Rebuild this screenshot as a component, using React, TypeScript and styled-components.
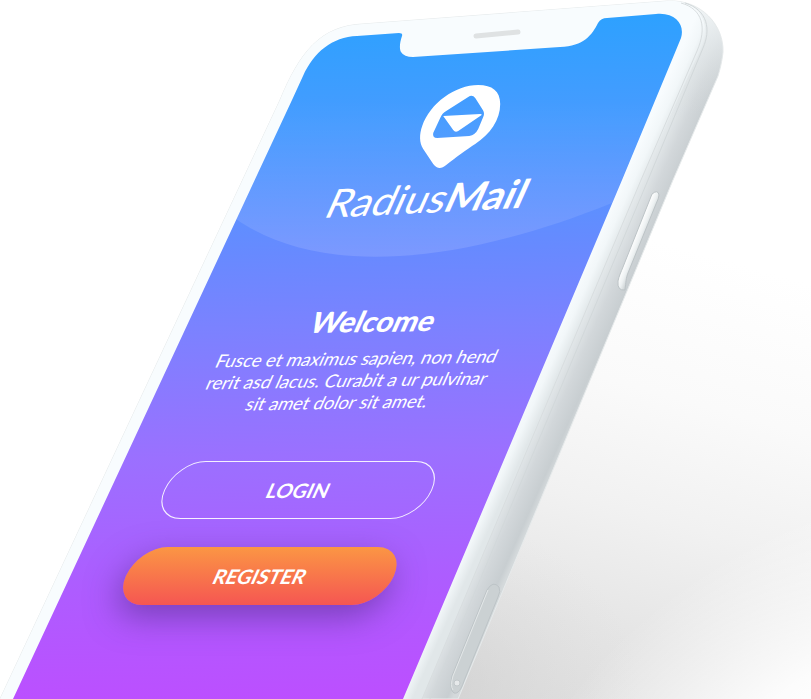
import React from "react";
import styled, { createGlobalStyle, css } from "styled-components";

const GlobalStyle = createGlobalStyle`
  *, *::before, *::after { box-sizing: border-box; }
  body {
    margin: 0;
    background: #ffffff;
    font-family: Lato, "Open Sans", sans-serif;
  }
`;

const Stage = styled.main`
  position: relative;
  display: flex;
  justify-content: center;
  min-height: 100vh;
  overflow: hidden;
`;

const PhoneArt = styled.svg`
  position: absolute;
  inset: 0;
  width: 100%;
  height: 100%;
`;

/* The whole column leans with the phone, so its centre line follows the screen. */
const Screen = styled.div`
  position: relative;
  display: flex;
  flex-direction: column;
  align-items: center;
  padding: 80px 0 92px;
  color: #ffffff;
  text-align: center;
  transform: skewX(-24deg);
  transform-origin: center 250px;
`;

const Brand = styled.header`
  display: flex;
  flex-direction: column;
  align-items: center;
`;

const Pin = styled.svg`
  display: block;
  width: 90px;
  height: 92px;
  transform: skewX(24deg);
`;

const Wordmark = styled.div`
  font-size: 40px;
  font-weight: 400;
  line-height: 52px;
  white-space: nowrap;
  transform: skewY(-3deg);

  strong {
    font-weight: 700;
  }
`;

const Intro = styled.section`
  margin-top: 80px;
  transform: skewY(-1deg);
`;

const Title = styled.h1`
  margin: 0;
  font-size: 29px;
  font-weight: 900;
  line-height: 34px;
`;

const Message = styled.p`
  margin: 9px 0 0;
  font-size: 18px;
  line-height: 22px;
  white-space: nowrap;
`;

const Actions = styled.div`
  display: flex;
  flex-direction: column;
  gap: 28px;
  margin-top: 48px;
`;

const PillButton = styled.button<{ $filled?: boolean }>`
  width: 268px;
  height: 58px;
  padding: 0;
  border: 1px solid rgba(255, 255, 255, 0.9);
  border-radius: 29px;
  background: transparent;
  color: #ffffff;
  font: 700 20px/24px Lato, "Open Sans", sans-serif;
  cursor: pointer;

  ${({ $filled }) =>
    $filled &&
    css`
      border: 0;
      background: linear-gradient(#fb9644, #f55652);
      box-shadow: 0 12px 32px rgba(76, 44, 130, 0.55);
    `}
`;

const bodyPath =
  "M0 699 L280 100 C300 52 320 26 363 24 L667 1 C702 -1 724 26 723 52 C722 60 721 66 718 76 L673 180 L458 699 Z";
const facePath =
  "M0 699 L280 100 C300 52 320 26 363 24 L667 1 C694 -1 708 18 705 36 C704 44 698 56 692 68 L641 180 L422 699 Z";
const screenPath =
  "M13 699 L292 100 L303 76 C314 52 332 37 357 36 L399 33 Q403 33 402 36 C400 42 399 48 401 52 Q404 57 413 57 L560 47 C584 46 592 35 598 23 Q601 18 607 18 L656 14 C676 12 685 25 681 38 L674 55 L622 180 L487 500 L403 699 Z";

const Phone = () => (
  <PhoneArt viewBox="0 0 811 699" preserveAspectRatio="xMidYMin slice" aria-hidden="true">
    <defs>
      <linearGradient id="floor" gradientUnits="userSpaceOnUse" x1="690" y1="250" x2="560" y2="720">
        <stop offset="0" stopColor="#ffffff" />
        <stop offset="0.3" stopColor="#fafafa" />
        <stop offset="0.55" stopColor="#f1f1f1" />
        <stop offset="0.8" stopColor="#e5e5e5" />
        <stop offset="1" stopColor="#dedede" />
      </linearGradient>
      <radialGradient
        id="floorCore"
        gradientUnits="userSpaceOnUse"
        cx="0"
        cy="0"
        r="1"
        gradientTransform="translate(440 690) scale(200 170)"
      >
        <stop offset="0" stopColor="#c8c8c8" stopOpacity="0.5" />
        <stop offset="1" stopColor="#d8d8d8" stopOpacity="0" />
      </radialGradient>
      <radialGradient
        id="floorLight"
        gradientUnits="userSpaceOnUse"
        cx="0"
        cy="0"
        r="1"
        gradientTransform="translate(830 740) rotate(-32) scale(360 210)"
      >
        <stop offset="0" stopColor="#ffffff" />
        <stop offset="0.3" stopColor="#ffffff" stopOpacity="0.9" />
        <stop offset="1" stopColor="#ffffff" stopOpacity="0" />
      </radialGradient>
      <linearGradient id="display" gradientUnits="userSpaceOnUse" x1="330" y1="20" x2="345" y2="699">
        <stop offset="0" stopColor="#2da1ff" />
        <stop offset="0.16" stopColor="#489bff" />
        <stop offset="0.34" stopColor="#678aff" />
        <stop offset="0.45" stopColor="#7b82ff" />
        <stop offset="0.64" stopColor="#9b70ff" />
        <stop offset="0.82" stopColor="#ad5dff" />
        <stop offset="1" stopColor="#bc4fff" />
      </linearGradient>
      <linearGradient id="side" gradientUnits="userSpaceOnUse" x1="641" y1="180" x2="675" y2="195">
        <stop offset="0" stopColor="#e5eaec" />
        <stop offset="0.45" stopColor="#d2d7da" />
        <stop offset="0.85" stopColor="#c8ced1" />
        <stop offset="1" stopColor="#d4d9db" />
      </linearGradient>
      <linearGradient id="cornerLight" gradientUnits="userSpaceOnUse" x1="690" y1="0" x2="715" y2="110">
        <stop offset="0" stopColor="#f4f8f9" />
        <stop offset="0.4" stopColor="#e4e9eb" stopOpacity="0.8" />
        <stop offset="1" stopColor="#d4d9db" stopOpacity="0" />
      </linearGradient>
      <linearGradient id="bezel" gradientUnits="userSpaceOnUse" x1="622" y1="180" x2="642" y2="189">
        <stop offset="0" stopColor="#f8fcfe" />
        <stop offset="0.5" stopColor="#f2f7f9" />
        <stop offset="1" stopColor="#e1e7e9" />
      </linearGradient>
      <linearGradient id="key" gradientUnits="userSpaceOnUse" x1="634" y1="238" x2="644" y2="242">
        <stop offset="0" stopColor="#ffffff" />
        <stop offset="0.5" stopColor="#edf1f2" />
        <stop offset="1" stopColor="#c9cfd1" />
      </linearGradient>
      <linearGradient id="haze" gradientUnits="userSpaceOnUse" x1="0" y1="100" x2="0" y2="256">
        <stop offset="0" stopColor="#ffffff" stopOpacity="0" />
        <stop offset="1" stopColor="#ffffff" stopOpacity="0.13" />
      </linearGradient>
    </defs>

    <path d="M640 230 H811 V699 H400 Z" fill="url(#floor)" />
    <path d="M640 230 H811 V699 H400 Z" fill="url(#floorCore)" />
    <path d="M640 230 H811 V699 H400 Z" fill="url(#floorLight)" />
    <path d={bodyPath} fill="url(#side)" />
    <path d={bodyPath} fill="url(#cornerLight)" stroke="#e6eaeb" />
    <path d={facePath} fill="url(#bezel)" />
    <path
      d="M685 3 C708 10 711 30 703 48 L648 180 L430 699"
      fill="none"
      stroke="#d2d8da"
    />
    <path d="M681 3 C703 9 707 28 697 51 L641 180 L422 699" fill="none" stroke="#d8dddf" />
    <path d={screenPath} fill="url(#display)" />
    <path
      d="M236 219 C300 264 420 280 612 203 L655 100 L292 100 Z"
      fill="url(#haze)"
    />

    <path d="M476 36 L518 32" stroke="#dfe2e3" strokeWidth="5" strokeLinecap="round" />

    <path
      d="M652 194 Q658 189 659 195 Q659 198 656 204 L628 273 C626 278 626 282 625 290 Q617 291 618 281 C619 276 621 272 623 267 Z"
      fill="url(#key)"
      stroke="#bcc3c6"
    />
    <path
      d="M487 590 Q493 580 499 587 Q501 591 498 597 L464 681 C461 690 458 694 454 693 Q449 690 452 676 Z"
      fill="#cbd1d3"
      stroke="#bdc4c7"
    />
    <path d="M488 590 L453 676 Q450 686 453 690" fill="none" stroke="#e3e7e8" />
    <circle cx="457" cy="683" r="3" fill="#e6e9ea" stroke="#c2c8cb" />
  </PhoneArt>
);

export default function App() {
  return (
    <>
      <GlobalStyle />
      <Stage>
        <Phone />
        <Screen>
          <Brand>
            <Pin viewBox="415 80 90 92" aria-hidden="true">
              <path
                fill="#ffffff"
                fillRule="evenodd"
                d="M478 85 C492 85 500 91 500 104 C500 120 490 134 475 144 C467 149 455 158 446 165 C441 169 437 169 433 164 L423 149 C419 143 419 134 422 126 C430 103 455 85 478 85 Z
                   M468 97 L446 111 Q442 113 440 118 L433 133 Q432 138 437 138 L469 136 Q475 135 478 129 L483 117 Q485 113 482 109 L475 98 Q472 94 468 97 Z"
              />
              <path
                fill="#ffffff"
                d="M443 116 L480 114 Q483 114 480 116 L458 131 Q455 133 453 130 Z"
              />
            </Pin>
            <Wordmark>
              Radius<strong>Mail</strong>
            </Wordmark>
          </Brand>
          <Intro>
            <Title>Welcome</Title>
            <Message>
              Fusce et maximus sapien, non hend
              <br />
              rerit asd lacus. Curabit a ur pulvinar
              <br />
              sit amet dolor sit amet.
            </Message>
          </Intro>
          <Actions>
            <PillButton type="button">LOGIN</PillButton>
            <PillButton type="button" $filled>
              REGISTER
            </PillButton>
          </Actions>
        </Screen>
      </Stage>
    </>
  );
}
